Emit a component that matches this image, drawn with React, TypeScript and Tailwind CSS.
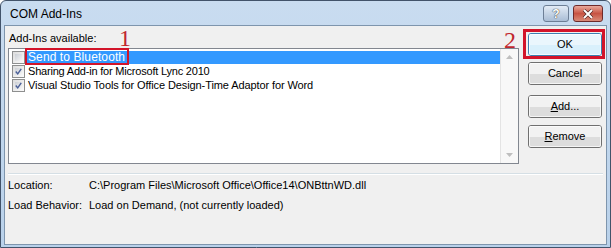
import React from 'react';

const font = { fontFamily: '"Liberation Sans", Arial, sans-serif' };

const CheckBox: React.FC<{ checked?: boolean }> = ({ checked }) => (
  <div className="w-[13px] h-[13px] border border-[#8e8f8f] bg-gradient-to-br from-[#dcdcdc] to-[#fbfbfb] p-[2px] shrink-0">
    <div className="w-full h-full bg-gradient-to-br from-[#cbcfd5] to-[#f6f6f6] flex items-center justify-center">
      {checked && (
        <svg width="9" height="9" viewBox="0 0 9 9">
          <path d="M1 4.5 L3.5 7.5 L8 1" fill="none" stroke="#4a5f97" strokeWidth="1.8" />
        </svg>
      )}
    </div>
  </div>
);

const WinButton: React.FC<{ children: React.ReactNode; className?: string; focused?: boolean }> = ({
  children,
  className = '',
  focused,
}) => (
  <div
    className={`relative h-[23px] w-[74px] rounded-[3px] border ${
      focused ? 'border-[#3c7fb1]' : 'border-[#707070]'
    } flex items-center justify-center text-[11px] text-black overflow-hidden ${className}`}
  >
    <div className="absolute inset-0 flex flex-col">
      <div className={`flex-1 ${focused ? 'bg-[#eaf6fd]' : 'bg-[#f2f2f2]'}`} />
      <div className={`flex-1 ${focused ? 'bg-[#d9f0fc]' : 'bg-[#dddddd]'}`} />
    </div>
    <div className="absolute inset-0 rounded-[2px] border border-white/70" />
    <span className="relative">{children}</span>
  </div>
);

export default function App() {
  return (
    <div className="w-[611px] h-[248px] bg-white" style={font}>
      <div className="h-full flex flex-col border border-[#42536a] rounded-t-[6px] bg-gradient-to-b from-[#c9dcf0] to-[#b9d1ea] px-[3px] pb-[2px]">
        {/* title bar */}
        <div className="h-[24px] flex items-start pr-[4px]">
          <div className="pl-[6px] pt-[4px] text-[12px] text-black">COM Add-Ins</div>
          <div className="ml-auto mt-[4px] flex gap-[4px]">
            <div className="w-[26px] h-[17px] rounded-[3px] border border-[#6d7f96] bg-gradient-to-b from-[#e3ecf6] to-[#a9bdd5] flex items-center justify-center">
              <span className="text-[12px] font-bold text-white leading-none" style={{ textShadow: '0 0 1px #333, 0 0 1px #333' }}>
                ?
              </span>
            </div>
            <div className="w-[30px] h-[17px] rounded-[3px] border border-[#6e2a2a] bg-gradient-to-b from-[#e8a99c] via-[#c75343] to-[#d88a78] flex items-center justify-center">
              <svg width="12" height="10" viewBox="0 0 12 10">
                <path d="M2 1 L10 9 M10 1 L2 9" stroke="#4a2020" strokeWidth="3.2" />
                <path d="M2 1 L10 9 M10 1 L2 9" stroke="#ffffff" strokeWidth="2" />
              </svg>
            </div>
          </div>
        </div>

        {/* client area */}
        <div className="relative flex-1 border border-[#7e95ad] bg-[#f0f0f0] text-[11px] text-black">
          <div className="flex pl-[3px] pt-[6px]">
            <div className="w-[511px]">
              <div className="h-[16px] pl-[1px] leading-[13px]">Add-Ins available:</div>
              <div className="relative h-[116px] border border-[#828790] bg-white flex">
                <div className="flex-1 pt-[1px]">
                  <div className="relative h-[14px] flex items-center pl-[3px]">
                    <CheckBox />
                    <div className="ml-[1px] flex-1 h-[13px] bg-[#3399ff] text-white pl-[2px] text-[12px] tracking-[0.1px] leading-[13px]">
                      Send to Bluetooth
                    </div>
                    <div className="absolute left-[16px] -top-[2px] w-[104px] h-[17px] border-[2.5px] border-[#d2142a]" />
                  </div>
                  <div className="h-[14px] flex items-center pl-[3px]">
                    <CheckBox checked />
                    <div className="ml-[1px] pl-[2px] leading-[13px] tracking-[-0.2px]">Sharing Add-in for Microsoft Lync 2010</div>
                  </div>
                  <div className="h-[14px] flex items-center pl-[3px]">
                    <CheckBox checked />
                    <div className="ml-[1px] pl-[2px] leading-[13px] tracking-[-0.1px]">
                      Visual Studio Tools for Office Design-Time Adaptor for Word
                    </div>
                  </div>
                </div>
                <div className="w-[18px] border-l border-[#e4e4e4] bg-[#f8f8f8] flex flex-col justify-between items-center py-[6px]">
                  <svg width="7" height="4" viewBox="0 0 7 4">
                    <path d="M0 4 L3.5 0 L7 4 Z" fill="#bfbfbf" />
                  </svg>
                  <svg width="7" height="4" viewBox="0 0 7 4">
                    <path d="M0 0 L3.5 4 L7 0 Z" fill="#bfbfbf" />
                  </svg>
                </div>
              </div>
            </div>

            <div className="ml-[9px] pt-[1px] flex flex-col">
              <div className="relative">
                <WinButton focused>OK</WinButton>
                <div className="absolute -left-[5px] -top-[4px] -right-[3px] -bottom-[3px] border-[3px] border-[#d2142a]" />
              </div>
              <WinButton className="mt-[6px]">Cancel</WinButton>
              <WinButton className="mt-[10px]">
                <span className="underline">A</span>dd...
              </WinButton>
              <WinButton className="mt-[7px]">
                <span className="underline">R</span>emove
              </WinButton>
            </div>
          </div>

          {/* separator */}
          <div className="mx-[3px] mt-[9px] border-t border-[#d5dfe5] border-b border-b-white" />

          <div className="pl-[3px]">
            <div className="h-[20px] flex items-center">
              <div className="w-[81px]">Location:</div>
              <div>C:\Program Files\Microsoft Office\Office14\ONBttnWD.dll</div>
            </div>
            <div className="h-[20px] flex items-center">
              <div className="w-[81px]">Load Behavior:</div>
              <div>Load on Demand, (not currently loaded)</div>
            </div>
          </div>

          {/* annotations */}
          <div
            className="absolute left-[114px] top-[0px] text-[24px] leading-[24px] text-[#c0272d]"
            style={{ fontFamily: '"Liberation Serif", serif' }}
          >
            1
          </div>
          <div
            className="absolute left-[499px] top-[2px] text-[24px] leading-[24px] text-[#c0272d]"
            style={{ fontFamily: '"Liberation Serif", serif' }}
          >
            2
          </div>
        </div>
      </div>
    </div>
  );
}
